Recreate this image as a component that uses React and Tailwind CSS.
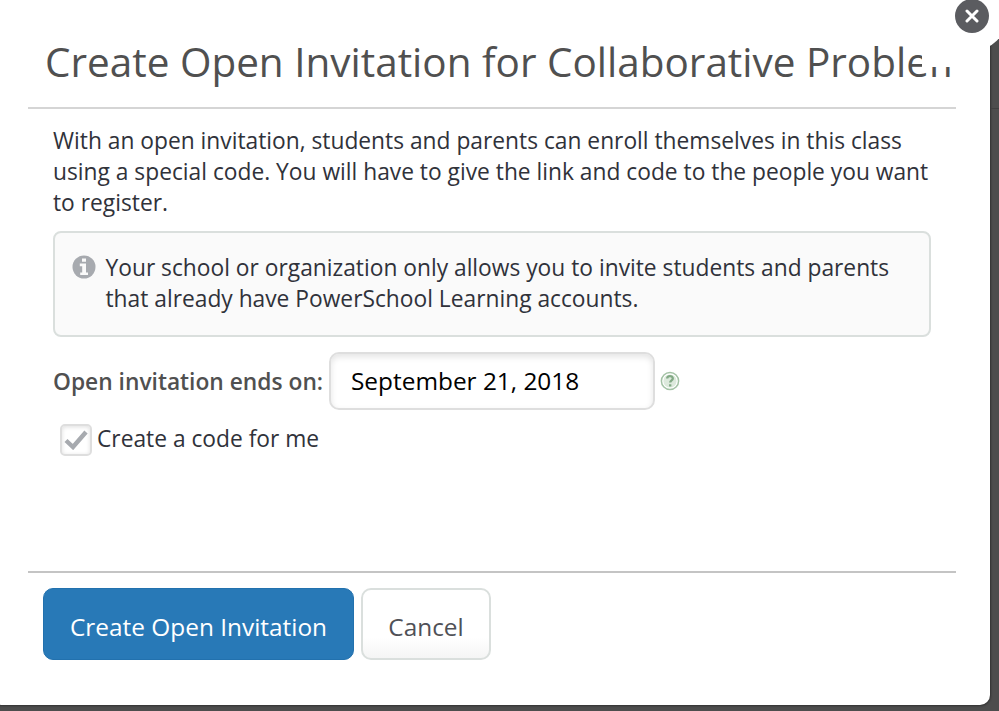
import React, { useState } from 'react'

const InfoIcon = () => (
  <svg viewBox="0 0 24 24" className="w-6 h-6 shrink-0">
    <circle cx="12" cy="12" r="11.5" fill="#a7aaaf" />
    <path
      d="M10 3.6h4v3.2h-4z M7.8 8.6h6.2v9h2v2.5H8.2v-2.5h2v-6.4H7.8z"
      fill="#fafafa"
    />
  </svg>
)

const HelpIcon = () => (
  <svg viewBox="0 0 20 20" className="w-5 h-5 shrink-0">
    <circle cx="10" cy="10" r="8.6" fill="#fff" stroke="#a3c2a5" strokeWidth="1.5" />
    <circle cx="10" cy="10" r="6.6" fill="#dce9dc" />
    <path
      d="M7.2 7.6c0-3.4 5.6-3.4 5.6 0 0 1.8-2.6 1.9-2.6 4M10.2 13.2v2.2"
      fill="none"
      stroke="#82a985"
      strokeWidth="2.3"
    />
  </svg>
)

const CloseButton = () => (
  <button className="absolute left-[937px] -top-[19px] flex items-center justify-center w-[70px] h-[70px] rounded-full bg-white">
    <span className="flex items-center justify-center w-[34px] h-[34px] rounded-full bg-[#5b5c60]">
      <svg viewBox="0 0 14 14" className="w-3.5 h-3.5">
        <path d="M2 2l10 10M12 2L2 12" stroke="#fff" strokeWidth="3" strokeLinecap="round" />
      </svg>
    </span>
  </button>
)

const App = () => {
  const [createCode, setCreateCode] = useState(true)

  return (
    <div className="relative w-[999px] h-[711px] overflow-hidden bg-[#4d4d4d] font-['Open_Sans',sans-serif] text-[#30323a]">
      <div className="-ml-2 -mt-2 w-[998px] h-[713px] pl-9 pt-2 pr-[34px] rounded-[10px] bg-white shadow-[0_0_2px_1px_#333]">
        <header className="h-[109px] pl-[17px] pt-[33px] border-b-2 border-[#d5d5d5]">
          <h1 className="w-[906px] overflow-hidden whitespace-nowrap text-[40.48px] leading-[58px] text-[#505050]">
            Create Open Invitation for Collaborative Problem
          </h1>
        </header>

        <main className="h-[462px] pl-[25px] pt-4">
          <p className="w-[890px] text-[22.78px] leading-[31px]">
            With an open invitation, students and parents can enroll themselves in this class
            <br />
            using a special code. You will have to give the link and code to the people you want
            <br />
            to register.
          </p>

          <div className="mt-[13px] flex w-[878px] h-[106px] pl-[17px] pt-[19px] border-2 border-[#dadfdd] rounded-[8px] bg-[#fafafa]">
            <div className="pt-[3px]">
              <InfoIcon />
            </div>
            <p className="ml-[9.5px] whitespace-nowrap text-[22.78px] leading-[31px]">
              Your school or organization only allows you to invite students and parents
              <br />
              that already have PowerSchool Learning accounts.
            </p>
          </div>

          <div className="mt-[15px] flex items-center h-[58px]">
            <label className="w-[276px] pt-0.5 whitespace-nowrap text-[22.77px] font-semibold text-[#505050]">
              Open invitation ends on:
            </label>
            <input
              type="text"
              defaultValue="September 21, 2018"
              className="w-[326px] h-[58px] pl-5 pb-0.5 border-2 border-[#dedede] rounded-[10px] bg-white text-[24.4px] text-black shadow-[inset_0_3px_6px_#e4e4e4]"
            />
            <div className="ml-[5px]">
              <HelpIcon />
            </div>
          </div>

          <div className="mt-[14px] ml-[7px] flex items-center h-8">
            <button
              onClick={() => setCreateCode(!createCode)}
              className="flex items-center justify-center w-8 h-8 border-2 border-[#dedede] rounded-[5px] bg-white shadow-[inset_0_1px_4px_#dedede]"
            >
              {createCode && (
                <svg viewBox="0 0 24 20" className="w-6 h-5">
                  <path d="M2 10.5l7 6.5L22 2" fill="none" stroke="#a7aaaf" strokeWidth="4.4" />
                </svg>
              )}
            </button>
            <span className="ml-[5px] -mt-px text-[22.77px] whitespace-nowrap">Create a code for me</span>
          </div>
        </main>

        <footer className="flex gap-[7px] pl-[15px] pt-[15px] border-t-2 border-[#c4c4c4]">
          <button className="w-[311px] h-[72px] pt-1.5 border border-[#2271ae] rounded-[10px] bg-[#2879b7] text-[24.4px] text-white whitespace-nowrap">
            Create Open Invitation
          </button>
          <button className="w-[130px] h-[72px] pt-1.5 border-2 border-[#dadfdd] rounded-[10px] bg-linear-to-b from-white from-70% to-[#f5f5f5] text-[24.4px] text-[#505157]">
            Cancel
          </button>
        </footer>
      </div>

      {/* divider of the dimmed page behind the dialog */}
      <div className="absolute right-0 top-[108px] w-2 h-px bg-[#404040]" />

      {/* white notch under the close button, cuts into the title */}
      <div className="absolute left-[922px] top-0 w-[50px] h-[67px] bg-white" />
      <CloseButton />
    </div>
  )
}

export default App
